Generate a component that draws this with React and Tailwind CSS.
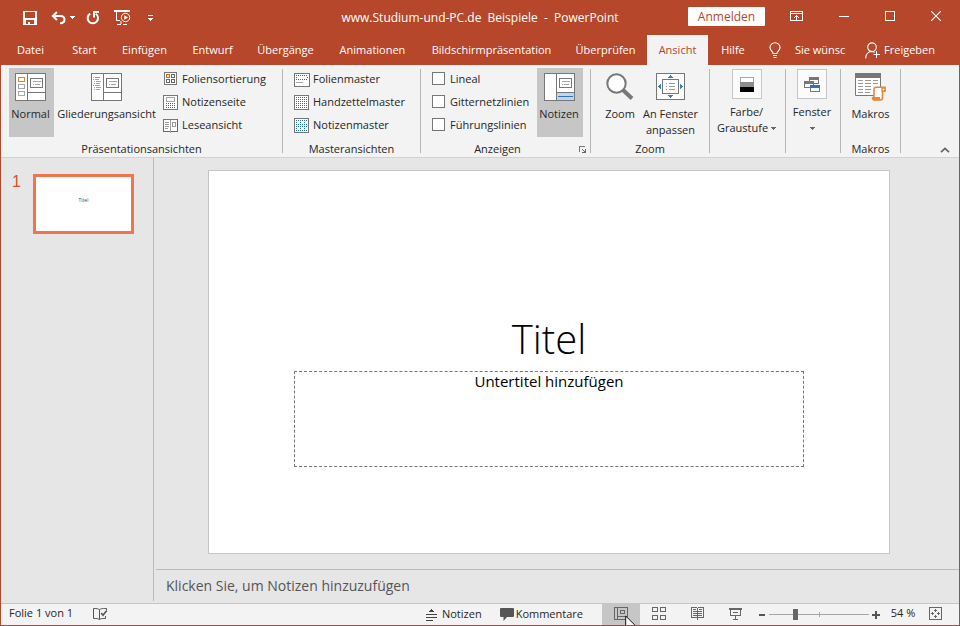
import React from "react";

const Svg = ({ w, h, crisp = true, children, className = "" }) => (
  <svg
    width={w}
    height={h}
    viewBox={`0 0 ${w} ${h}`}
    fill="none"
    aria-hidden="true"
    shapeRendering={crisp ? "crispEdges" : "auto"}
    className={`block shrink-0 ${className}`}
  >
    {children}
  </svg>
);

/* ---------- title bar icons ---------- */

const SaveIcon = () => (
  <Svg w={14} h={14}>
    <path d="M0 0H14V14H0Z" fill="#fff" />
    <path d="M2 1H12V7H2Z M3 9H11V13H7V11H5V13H3Z" fill="#b7472a" />
  </Svg>
);

const UndoIcon = () => (
  <Svg w={15} h={14} crisp={false}>
    <path d="M1.5 5H9.5C12 5 13.5 6.5 13.5 8.6C13.5 10.8 12 12.3 9 12.3" stroke="#fff" strokeWidth="2" />
    <path d="M6 1L1.8 5L6 9" stroke="#fff" strokeWidth="2" />
  </Svg>
);

const RedoIcon = () => (
  <Svg w={14} h={14} crisp={false}>
    <path d="M4.2 2.6A5.2 5.2 0 1 0 9.8 2.8" stroke="#fff" strokeWidth="2" />
    <path d="M13 1H8V6.5" stroke="#fff" strokeWidth="2" />
  </Svg>
);

const SlideshowStartIcon = () => (
  <Svg w={17} h={16} crisp={false}>
    <path d="M0 1H16M2.5 1V10.5H6M7 11V14M3 14.5H7M9 14.5H13" stroke="#fff" />
    <path d="M0 0H16V2H0Z" fill="#fff" />
    <circle cx="11.5" cy="7.5" r="4.2" stroke="#fff" />
    <path d="M10.3 5.2L14 7.5L10.3 9.8Z" fill="#fff" />
  </Svg>
);

const Caret = ({ color = "#fff" }) => (
  <Svg w={5} h={3}>
    <path d="M0 0H5V1H4V2H3V3H2V2H1V1H0Z" fill={color} />
  </Svg>
);

const CustomizeIcon = () => (
  <Svg w={5} h={6}>
    <path d="M0 0H5V1H0Z M0 3H5V4H4V5H3V6H2V5H1V4H0Z" fill="#fff" />
  </Svg>
);

const RibbonOptionsIcon = () => (
  <Svg w={13} h={10}>
    <path d="M.5 .5H12.5V9.5H.5Z M1 2.5H12" stroke="#fff" />
    <path d="M6 4H7V9H6Z M5 5H8V6H5Z M4 6H5V7H4Z M8 6H9V7H8Z" fill="#fff" />
  </Svg>
);

const MinimizeIcon = () => (
  <Svg w={10} h={10}>
    <path d="M0 5.5H10" stroke="#fff" />
  </Svg>
);

const MaximizeIcon = () => (
  <Svg w={10} h={10}>
    <path d="M.5 .5H9.5V9.5H.5Z" stroke="#fff" />
  </Svg>
);

const CloseIcon = () => (
  <Svg w={10} h={10} crisp={false}>
    <path d="M0 0L10 10M10 0L0 10" stroke="#fff" strokeWidth="1.1" />
  </Svg>
);

const BulbIcon = () => (
  <Svg w={13} h={17} crisp={false}>
    <path
      d="M4 11.5C4 9.5 1 8.7 1 5.6C1 2.9 3.2 .8 6 .8S11 2.9 11 5.6C11 8.7 8 9.5 8 11.5Z"
      stroke="#fff"
      strokeWidth="1.1"
    />
    <path d="M4 13.5H8M4.5 15.5H7.5" stroke="#fff" />
  </Svg>
);

const ShareIcon = () => (
  <Svg w={16} h={17} crisp={false}>
    <circle cx="7" cy="5.2" r="4.3" stroke="#fff" strokeWidth="1.1" />
    <path d="M.7 16.5C.7 12.5 3 9.6 6.5 9.5C8 9.5 9 9.9 9.8 10.4M8.5 12.5H15M11.5 9V16" stroke="#fff" strokeWidth="1.1" />
  </Svg>
);

/* ---------- ribbon icons ---------- */

const SlideDetail = () => (
  <>
    <path d="M15.5 5.5H27.5V14.5H15.5Z" stroke="#777" />
    <path d="M18 8.5H26M20 11.5H25M18 11.5H19" stroke="#a6a6a6" />
  </>
);

const NormalIcon = () => (
  <Svg w={31} h={28}>
    <path d="M.5 .5H30.5V27.5H.5Z" fill="#fff" stroke="#777" />
    <path d="M12.5 1V27M13 19.5H30" stroke="#777" />
    <SlideDetail />
    <path d="M3 4H10V9H3Z" fill="#e8812f" />
    <path d="M4 5H9V8H4Z" fill="#fff" />
    <path d="M3.5 11.5H9.5V15.5H3.5Z M3.5 18.5H9.5V22.5H3.5Z" stroke="#a6a6a6" />
  </Svg>
);

const OutlineIcon = () => (
  <Svg w={31} h={28}>
    <path d="M.5 .5H30.5V27.5H.5Z" fill="#fff" stroke="#777" />
    <path d="M12.5 1V27M13 19.5H30" stroke="#777" />
    <SlideDetail />
    <path d="M4 4H9V5H4Z" fill="#e8812f" />
    <path
      d="M2 4.5H3M2 6.5H3M4 6.5H8M3 8.5H4M5 8.5H10M3 10.5H4M5 10.5H9M2 12.5H3M4 12.5H9M3 14.5H4M5 14.5H10M3 16.5H4M5 16.5H9"
      stroke="#a6a6a6"
    />
  </Svg>
);

const NotesPaneIcon = () => (
  <Svg w={31} h={28}>
    <path d="M.5 .5H30.5V27.5H.5Z" fill="#fff" stroke="#777" />
    <path d="M13 20H30V27H13Z" fill="#bdd5ee" />
    <path d="M12.5 1V27M13 19.5H30" stroke="#777" />
    <SlideDetail />
    <path d="M14 23H29V24H14Z" fill="#2e75b6" />
  </Svg>
);

const SorterIcon = () => (
  <Svg w={16} h={15}>
    <path d="M1.5 .5H13.5V12.5H1.5Z" fill="#fff" stroke="#777" />
    <path d="M8.5 2.5H11.5V5.5H8.5Z M3.5 7.5H6.5V10.5H3.5Z M8.5 7.5H11.5V10.5H8.5Z" stroke="#666" />
    <path d="M3 2H7V6H3Z" fill="#e06c10" />
    <path d="M4 3H6V5H4Z" fill="#fff" />
  </Svg>
);

const NotesPageIcon = () => (
  <Svg w={16} h={15}>
    <path d="M.5 .5H14.5V14.5H.5Z" fill="#fff" stroke="#777" />
    <path d="M3.5 2.5H11.5V6.5H3.5Z" stroke="#a6a6a6" />
    <path d="M3 8.5H13M3 10.5H13M3 12.5H13" stroke="#1f6fbf" strokeDasharray="1 1" />
  </Svg>
);

const ReadingIcon = () => (
  <Svg w={16} h={15}>
    <path d="M.5 1.5H14.5V13.5H.5Z" fill="#fff" stroke="#777" />
    <path d="M0 13H15V14H0Z M0 8H1V14H0Z M14 1H15V14H14Z" fill="#2e75b6" />
    <path d="M7.5 2V15" stroke="#a6a6a6" />
    <path d="M2 4.5H6M2 6.5H6M2 8.5H6M2 10.5H5M9.5 4.5H12.5V8.5H9.5Z" stroke="#999" />
  </Svg>
);

const SlideMasterIcon = () => (
  <Svg w={16} h={14}>
    <path d="M.5 .5H15.5V13.5H.5Z" fill="#fff" stroke="#777" />
    <path d="M2 2.5H14M2 4.5H3M13 4.5H14M2 6.5H14" stroke="#1f6fbf" strokeDasharray="1 1" />
    <path d="M2 9.5H9" stroke="#a6a6a6" />
  </Svg>
);

const HandoutMasterIcon = () => (
  <Svg w={16} h={15}>
    <path d="M.5 .5H14.5V14.5H.5Z" fill="#fff" stroke="#777" />
    <path d="M2 2.5H13M2 4.5H13M2 6.5H13M2 8.5H13M2 10.5H13M2 12.5H13" stroke="#1f6fbf" strokeDasharray="1 1" />
  </Svg>
);

const NotesMasterIcon = () => (
  <Svg w={16} h={15}>
    <path d="M.5 .5H14.5V14.5H.5Z" fill="#fff" stroke="#777" />
    <path d="M2 2.5H13M2 6.5H13M2 8.5H13M2 12.5H13" stroke="#1f6fbf" strokeDasharray="1 1" />
    <path d="M2 4.5H13M2 10.5H13" stroke="#1f6fbf" strokeDasharray="1 3" />
  </Svg>
);

const ZoomIcon = () => (
  <Svg w={28} h={28} crisp={false}>
    <path d="M17 17L26 25.5" stroke="#777" strokeWidth="4" />
    <circle cx="10.5" cy="10.5" r="9.2" fill="#fff" stroke="#777" strokeWidth="2" />
  </Svg>
);

const FitIcon = () => (
  <Svg w={29} h={28}>
    <path d="M.5 .5H28.5V26.5H.5Z" fill="#fff" stroke="#777" />
    <path d="M6.5 6.5H22.5V20.5H6.5Z" stroke="#777" />
    <path d="M10 10.5H11M13 10.5H19M10 13.5H11M13 13.5H19M10 16.5H11M13 16.5H19" stroke="#999" />
    <path
      d="M14 2H15V3H16V4H17V5H12V4H13V3H14Z M12 22H17V23H16V24H15V25H14V24H13V23H12Z M2 13H3V12H4V11H5V16H4V15H3V14H2Z M24 11H25V12H26V13H27V14H26V15H25V16H24Z"
      fill="#3b7fc0"
    />
  </Svg>
);

const GrayscaleIcon = () => (
  <Svg w={14} h={15}>
    <path d="M.5 .5H13.5V6H.5Z" fill="#fff" stroke="#a6a6a6" />
    <path d="M0 5H14V10H0Z" fill="#8c8c8c" />
    <path d="M0 10H14V15H0Z" fill="#000" />
  </Svg>
);

const WindowsIcon = () => (
  <Svg w={17} h={15}>
    <path d="M5.5 1.5H14.5V6.5H5.5Z" fill="#fff" stroke="#777" />
    <path d="M5 0H15V3H5Z" fill="#777" />
    <path d="M.5 5.5H9.5V10.5H.5Z" fill="#fff" stroke="#777" />
    <path d="M0 4H10V7H0Z" fill="#777" />
    <path d="M6.5 8.5H15.5V14.5H6.5Z" fill="#fff" stroke="#777" />
    <path d="M6 8H16V11H6Z" fill="#2e75b6" />
  </Svg>
);

const MacrosIcon = () => (
  <Svg w={31} h={28} crisp={false}>
    <path d="M.5 .5H25.5V22.5H.5Z" fill="#fff" stroke="#777" />
    <path d="M0 0H26V5H0Z" fill="#777" />
    <path
      d="M3 7.5H8M10 7.5H16M18 7.5H23M3 10.5H8M10 10.5H16M18 10.5H23M3 13.5H8M10 13.5H16M3 16.5H8M10 16.5H16M3 19.5H8M10 19.5H15"
      stroke="#999"
    />
    <path d="M19 25V16C19 14.8 20 14.2 21 14.2H30V18H27.5V24.5C27.5 26 26.8 27 25.5 27H19Z" fill="#fff" stroke="#e8883a" strokeWidth="1.6" />
    <path d="M16.8 24H25V27.2H18.5C17.4 27.2 16.8 26.4 16.8 25.5Z" fill="#e8883a" />
    <path d="M27 15H30V18H27Z" fill="#fff" stroke="#e8883a" strokeWidth="1.4" />
  </Svg>
);

const LauncherIcon = () => (
  <Svg w={7} h={7}>
    <path d="M.5 6V.5H6" stroke="#777" />
    <path d="M3 3H4V4H3Z M4 4H5V5H4Z M6 3H7V7H3V6H5V5H6Z" fill="#666" />
  </Svg>
);

const CollapseIcon = () => (
  <Svg w={10} h={6} crisp={false}>
    <path d="M1 5.2L5 1.4L9 5.2" stroke="#666" strokeWidth="1.8" />
  </Svg>
);

/* ---------- status bar icons ---------- */

const SpellIcon = () => (
  <Svg w={15} h={14} crisp={false}>
    <path d="M6.5 3V12M6.5 3C5.8 1.6 4 1.5 .5 1.5V11.5C4 11.5 6 11.5 6.5 12.8C7 11.5 9 11.5 12.5 11.5V9" stroke="#555" />
    <path d="M6.5 3C7 1.6 8.5 1.5 13.5 1.5V3" stroke="#555" />
    <path d="M8.2 6L10 8.2L13.8 3.6" stroke="#555" strokeWidth="1.6" />
  </Svg>
);

const NotesToggleIcon = () => (
  <Svg w={11} h={12}>
    <path d="M5 0H6V1H7V2H8V3H3V2H4V1H5Z" fill="#444" />
    <path d="M0 5.5H11M0 8.5H11M0 11.5H7" stroke="#444" />
  </Svg>
);

const CommentIcon = () => (
  <Svg w={14} h={13} crisp={false}>
    <path d="M1 0H13Q14 0 14 1V8Q14 9 13 9H7L3.5 13V9H1Q0 9 0 8V1Q0 0 1 0Z" fill="#555" />
  </Svg>
);

const NormalViewIcon = () => (
  <Svg w={14} h={13}>
    <path d="M.5 .5H13.5V12.5H.5Z M3.5 1V12M4 9.5H13M6.5 3.5H10.5V6.5H6.5Z" stroke="#666" />
  </Svg>
);

const SorterViewIcon = () => (
  <Svg w={14} h={13}>
    <path d="M.5 .5H5.5V4.5H.5Z M8.5 .5H13.5V4.5H8.5Z M.5 8.5H5.5V12.5H.5Z M8.5 8.5H13.5V12.5H8.5Z" stroke="#666" />
  </Svg>
);

const ReadingViewIcon = () => (
  <Svg w={13} h={13}>
    <path d="M.5 .5H5.5L6.5 1.5L7.5 .5H12.5V10.5H7.5L6.5 11.5L5.5 10.5H.5Z" stroke="#666" />
    <path d="M6 1H7V13H6Z" fill="#666" />
    <path d="M2 2.5H5M2 4.5H6M2 6.5H6M2 8.5H6M8 2.5H11M7 4.5H11M7 6.5H11M7 8.5H11" stroke="#666" />
  </Svg>
);

const ShowViewIcon = () => (
  <Svg w={13} h={12}>
    <path d="M0 0H13V2H0Z" fill="#666" />
    <path d="M1.5 2V7.5H11.5V2M4 4.5H9M6.5 8V11M4 11.5H9" stroke="#666" />
  </Svg>
);

const FitWindowIcon = () => (
  <Svg w={13} h={13}>
    <path d="M.5 .5H12.5V12.5H.5Z" stroke="#666" />
    <path
      d="M6 2H7V5H6Z M5 3H8V4H5Z M6 8H7V11H6Z M5 9H8V10H5Z M2 6H5V7H2Z M3 5H4V8H3Z M8 6H11V7H8Z M9 5H10V8H9Z"
      fill="#666"
    />
  </Svg>
);

/* ---------- parts ---------- */

const tabs = [
  ["Datei", "w-[59px]"],
  ["Start", "w-[49px]"],
  ["Einfügen", "w-[71px]"],
  ["Entwurf", "w-[65px]"],
  ["Übergänge", "w-[81px]"],
  ["Animationen", "w-[93px]"],
  ["Bildschirmpräsentation", "w-[145px]"],
  ["Überprüfen", "w-[83px]"],
  ["Ansicht", "w-[61px]"],
  ["Hilfe", "w-[50px]"],
];

const Group = ({ label, width, launcher, children }) => (
  <>
    <section className={`flex shrink-0 flex-col ${width}`} aria-label={label}>
      <div className="flex h-[69px]">{children}</div>
      <div className="mt-1 flex h-4 items-center">
        <span className="flex-1 text-center">{label}</span>
        {launcher && (
          <button className="flex w-4 justify-center" aria-label="Rastereinstellungen">
            <LauncherIcon />
          </button>
        )}
      </div>
    </section>
    <div className="mt-px h-[84px] w-px shrink-0 bg-[#b5b5b5]" />
  </>
);

const BigButton = ({ icon, width, active, children }) => (
  <button
    aria-pressed={active}
    className={`flex shrink-0 flex-col items-center gap-[5px] pt-[5px] leading-4 whitespace-nowrap ${width} ${active ? "bg-[#c6c6c6] pr-0.5" : ""}`}
  >
    {icon}
    <span>{children}</span>
  </button>
);

const BoxedButton = ({ icon, children }) => (
  <button className="flex w-full flex-col items-center gap-[5px] pt-px pr-0.5 leading-4 whitespace-nowrap">
    <span className="flex size-[30px] items-center justify-center border border-[#c6c6c6] bg-[#fbfbfb]">{icon}</span>
    <span className="flex flex-col items-center">{children}</span>
  </button>
);

const SmallButton = ({ icon, children }) => (
  <button className="flex h-[23px] items-center gap-[3px] whitespace-nowrap">
    {icon}
    <span>{children}</span>
  </button>
);

const Check = ({ children }) => (
  <label className="flex h-[23px] items-center gap-[5px] whitespace-nowrap">
    <input type="checkbox" className="mb-0.5 size-[13px] shrink-0 appearance-none border border-[#777] bg-white checked:bg-[#b7472a]" />
    <span>{children}</span>
  </label>
);

const ViewButton = ({ label, active, children }) => (
  <button
    aria-label={label}
    aria-pressed={active}
    className={`flex h-full w-[38px] items-center justify-center pb-0.5 ${active ? "bg-[#c6c6c6]" : ""}`}
  >
    {children}
  </button>
);

const TitleBar = () => (
  <div className="grid h-[35px] grid-cols-[1fr_auto_1fr] text-[12px] text-white">
    <div className="flex items-center pl-[22px]">
      <button aria-label="Speichern"><SaveIcon /></button>
      <button aria-label="Rückgängig" className="ml-[14px] flex items-center gap-1"><UndoIcon /><Caret /></button>
      <button aria-label="Wiederholen" className="ml-[11px]"><RedoIcon /></button>
      <button aria-label="Von Beginn an" className="ml-[14px]"><SlideshowStartIcon /></button>
      <button aria-label="Symbolleiste anpassen" className="ml-[17px]"><CustomizeIcon /></button>
    </div>
    <h1 className="self-center whitespace-pre">www.Studium-und-PC.de  Beispiele  -  PowerPoint</h1>
    <div className="flex items-start justify-end">
      <button className="mt-[7px] mr-[9px] h-[19px] w-[77px] rounded-[1px] bg-white text-[#b7472a]">Anmelden</button>
      <button aria-label="Menübandoptionen" className="flex h-8 w-[47px] items-center justify-center pr-0.5"><RibbonOptionsIcon /></button>
      <button aria-label="Minimieren" className="flex h-8 w-[46px] items-center justify-center"><MinimizeIcon /></button>
      <button aria-label="Maximieren" className="flex h-8 w-[46px] items-center justify-center"><MaximizeIcon /></button>
      <button aria-label="Schließen" className="flex h-8 w-[46px] items-center justify-center"><CloseIcon /></button>
    </div>
  </div>
);

const TabBar = () => (
  <nav className="flex h-[30px] text-white">
    {tabs.map(([name, width]) => (
      <button
        key={name}
        className={`shrink-0 text-center whitespace-nowrap ${width} ${name === "Ansicht" ? "bg-[#f3f3f3] text-[#b7472a]" : ""}`}
      >
        {name}
      </button>
    ))}
    <button className="ml-[11px] flex items-center gap-[13px]">
      <BulbIcon />
      <span className="whitespace-nowrap">Sie wünsc</span>
    </button>
    <button className="mr-6 ml-auto flex items-center gap-[3px]">
      <ShareIcon />
      Freigeben
    </button>
  </nav>
);

const Ribbon = () => (
  <div className="flex h-[93px] border-b border-[#d2d2d2] bg-[#f3f3f3] pt-[3px] text-[#262626]">
    <Group label="Präsentationsansichten" width="w-[281px]">
      <BigButton icon={<NormalIcon />} width="ml-2 w-[45px]" active>Normal</BigButton>
      <BigButton icon={<OutlineIcon />} width="w-[105px]">Gliederungsansicht</BigButton>
      <div className="ml-1 flex flex-col">
        <SmallButton icon={<SorterIcon />}>Foliensortierung</SmallButton>
        <SmallButton icon={<NotesPageIcon />}>Notizenseite</SmallButton>
        <SmallButton icon={<ReadingIcon />}>Leseansicht</SmallButton>
      </div>
    </Group>
    <Group label="Masteransichten" width="w-[137px]">
      <div className="ml-[11px] flex flex-col">
        <SmallButton icon={<SlideMasterIcon />}>Folienmaster</SmallButton>
        <SmallButton icon={<HandoutMasterIcon />}>Handzettelmaster</SmallButton>
        <SmallButton icon={<NotesMasterIcon />}>Notizenmaster</SmallButton>
      </div>
    </Group>
    <Group label="Anzeigen" width="w-[169px]" launcher>
      <div className="ml-[11px] flex flex-1 flex-col">
        <Check>Lineal</Check>
        <Check>Gitternetzlinien</Check>
        <Check>Führungslinien</Check>
      </div>
      <BigButton icon={<NotesPaneIcon />} width="mr-[7px] w-[46px]" active>Notizen</BigButton>
    </Group>
    <Group label="Zoom" width="w-[118px]">
      <BigButton icon={<ZoomIcon />} width="ml-2 w-[42px]">Zoom</BigButton>
      <BigButton icon={<FitIcon />} width="w-[59px]">An Fenster<br />anpassen</BigButton>
    </Group>
    <Group label="" width="w-[75px]">
      <BoxedButton icon={<GrayscaleIcon />}>
        <span>Farbe/</span>
        <span className="flex items-center gap-[3px]">Graustufe<Caret color="#666" /></span>
      </BoxedButton>
    </Group>
    <Group label="" width="w-[54px]">
      <BoxedButton icon={<WindowsIcon />}>
        <span>Fenster</span>
        <span className="flex h-4 items-center"><Caret color="#666" /></span>
      </BoxedButton>
    </Group>
    <Group label="Makros" width="w-[59px]">
      <BigButton icon={<MacrosIcon />} width="w-full">Makros</BigButton>
    </Group>
    <button aria-label="Menüband reduzieren" className="mr-[9px] mb-1 ml-auto self-end">
      <CollapseIcon />
    </button>
  </div>
);

const SlideList = () => (
  <aside className="flex w-[152px] shrink-0 items-start pt-4 pl-[11px]">
    <span className="w-[21px] font-[Liberation_Sans,sans-serif] text-base leading-4 text-[#d35230]">1</span>
    <button className="flex h-[60px] w-[101px] justify-center border-3 border-[#f27350] bg-white pt-[20px] text-[5px] leading-[7px] text-[#444]">
      Titel
    </button>
  </aside>
);

const Editor = () => (
  <main className="flex min-w-0 flex-1 flex-col">
    <div className="flex-1 pt-3 pr-[69px] pl-[54px]">
      <article className="flex aspect-video w-full flex-col border border-[#c6c6c6] bg-white text-black">
        <h2 className="flex h-[52.5%] items-end justify-center pb-[6px] text-[40px] leading-[52px] font-light">Titel</h2>
        <div className="mx-auto h-1/4 w-3/4 border border-dashed border-[#777] text-center text-[15px] leading-[18px]">
          Untertitel hinzufügen
        </div>
      </article>
    </div>
    <input
      aria-label="Notizen"
      placeholder="Klicken Sie, um Notizen hinzuzufügen"
      className="ml-0.5 h-[34px] border-t border-[#bababa] bg-transparent pb-0.5 pl-[10px] text-[14px] text-[#555] placeholder:text-[#555] placeholder:opacity-100"
    />
  </main>
);

const StatusBar = () => (
  <footer className="flex h-[22px] items-center border-t border-[#c6c6c6] bg-[#f3f3f3] pl-2 text-[#262626]">
    <span className="pb-0.5">Folie 1 von 1</span>
    <button aria-label="Rechtschreibung" className="ml-5 pb-0.5"><SpellIcon /></button>
    <button className="ml-auto flex items-center gap-[5px]"><NotesToggleIcon />Notizen</button>
    <button className="mr-[19px] ml-[18px] flex items-center gap-0.5"><CommentIcon />Kommentare</button>
    <div className="relative h-full">
      <ViewButton label="Normal" active><NormalViewIcon /></ViewButton>
      <svg width="13" height="20" viewBox="0 0 13 20" className="absolute top-[11px] left-[23px] z-10 h-[12px] overflow-hidden" preserveAspectRatio="xMinYMin slice" aria-hidden="true">
        <path d="M.7 1V16.5L4.3 13L7 19L9.3 18L6.7 12.2H12Z" fill="#fff" stroke="#111" />
      </svg>
    </div>
    <ViewButton label="Foliensortierung"><SorterViewIcon /></ViewButton>
    <ViewButton label="Leseansicht"><ReadingViewIcon /></ViewButton>
    <ViewButton label="Bildschirmpräsentation"><ShowViewIcon /></ViewButton>
    <button aria-label="Verkleinern" className="flex w-[15px] justify-center">
      <Svg w={6} h={2}><path d="M0 0H6V2H0Z" fill="#555" /></Svg>
    </button>
    <div className="relative flex items-center">
      <span className="absolute left-[50px] h-[5px] w-px bg-[#a6a6a6]" />
      <input
        type="range"
        aria-label="Zoom"
        min="0"
        max="100"
        defaultValue="25"
        className="relative h-[11px] w-[100px] appearance-none bg-transparent [&::-webkit-slider-runnable-track]:h-px [&::-webkit-slider-runnable-track]:bg-[#a6a6a6] [&::-webkit-slider-thumb]:-mt-[5px] [&::-webkit-slider-thumb]:h-[11px] [&::-webkit-slider-thumb]:w-[5px] [&::-webkit-slider-thumb]:appearance-none [&::-webkit-slider-thumb]:bg-[#666]"
      />
    </div>
    <button aria-label="Vergrößern" className="flex w-[14px] justify-center">
      <Svg w={8} h={8}><path d="M3 0H5V3H8V5H5V8H3V5H0V3H3Z" fill="#555" /></Svg>
    </button>
    <button className="w-10 pb-0.5 text-center">54 %</button>
    <button aria-label="An Fenster anpassen" className="mr-3 flex w-6 justify-center pb-0.5"><FitWindowIcon /></button>
  </footer>
);

export default function App() {
  return (
    <div className="flex min-h-screen flex-col overflow-hidden border-x border-b border-[#b7472a] bg-[#e6e6e6] font-['Open_Sans','Noto_Sans',sans-serif] text-[11px]">
      <header className="bg-[#b7472a]">
        <TitleBar />
        <TabBar />
      </header>
      <Ribbon />
      <div className="flex flex-1">
        <SlideList />
        <div className="mb-[2px] w-px bg-[#bababa]" />
        <Editor />
      </div>
      <StatusBar />
    </div>
  );
}
